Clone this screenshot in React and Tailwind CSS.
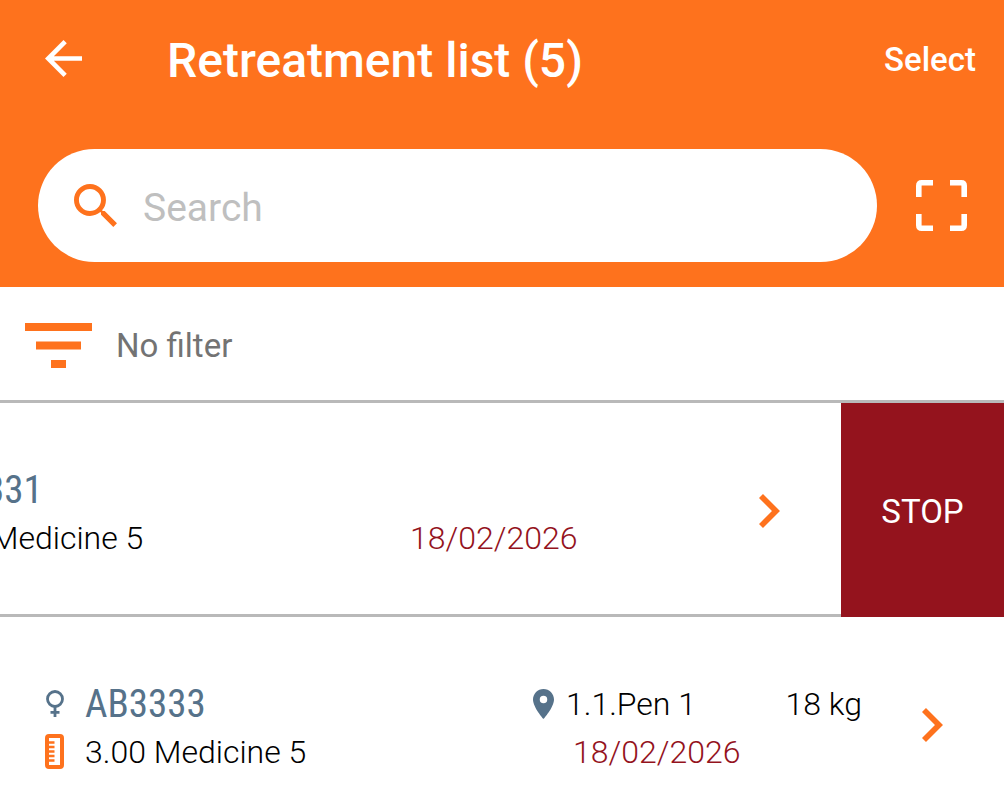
import React from "react";

function BackIcon() {
  return (
    <svg viewBox="4 4 16 16" className="size-[37px] fill-current" aria-hidden="true">
      <path d="M20 11H7.83l5.59-5.59L12 4l-8 8 8 8 1.41-1.41L7.83 13H20v-2z" />
    </svg>
  );
}

function SearchIcon() {
  return (
    <svg viewBox="3 3 17.5 17.5" className="size-[43px] shrink-0 fill-[#fe721d]" aria-hidden="true">
      <path d="M15.5 14h-.79l-.28-.27A6.471 6.471 0 0 0 16 9.5 6.5 6.5 0 1 0 9.5 16c1.61 0 3.09-.59 4.23-1.57l.27.28v.79l5 4.99L20.49 19l-4.99-5zm-6 0C7.01 14 5 11.99 5 9.5S7.01 5 9.5 5 14 7.01 14 9.5 11.99 14 9.5 14z" />
    </svg>
  );
}

function ScanIcon() {
  return (
    <svg viewBox="0 0 51 51" className="size-[51px] fill-none stroke-current stroke-[5.6]" aria-hidden="true">
      <path d="M2.8 17V5.8Q2.8 2.8 5.8 2.8H17M34 2.8H45.2Q48.2 2.8 48.2 5.8V17M48.2 34V45.2Q48.2 48.2 45.2 48.2H34M17 48.2H5.8Q2.8 48.2 2.8 45.2V34" />
    </svg>
  );
}

function FilterIcon() {
  return (
    <svg viewBox="0 0 67 45" className="h-[45px] w-[67px] fill-[#fe721d]" aria-hidden="true">
      <path d="M0 0H67V8H0zM11 18.5H56V26.5H11zM26 37H41V45H26z" />
    </svg>
  );
}

function ChevronIcon() {
  return (
    <svg viewBox="8.59 6 7.41 12" className="h-[34px] w-[21px] fill-[#fe721d]" aria-hidden="true">
      <path d="M10 6 8.59 7.41 13.17 12l-4.58 4.59L10 18l6-6z" />
    </svg>
  );
}

function FemaleIcon() {
  return (
    <svg viewBox="0 0 18 27" className="h-[27px] w-[18px] fill-none stroke-[#56728a] stroke-[2.8]" aria-hidden="true">
      <circle cx="9" cy="9" r="7.5" />
      <path d="M9 16.5V27M4.5 22.3H13.5" />
    </svg>
  );
}

function DoseIcon() {
  return (
    <svg viewBox="0 0 19 35" className="h-[35px] w-[19px] fill-none stroke-[#fe721d]" aria-hidden="true">
      <rect x="2" y="2" width="15" height="31" rx="2" strokeWidth="4" />
      <path d="M4 8.5H9.5M4 13H9.5M4 17.5H9.5M4 22H9.5M4 26.5H9.5" strokeWidth="2.4" />
    </svg>
  );
}

function PinIcon() {
  return (
    <svg viewBox="5 2 14 20" className="h-[30px] w-[21px] fill-[#56728a]" aria-hidden="true">
      <path d="M12 2C8.13 2 5 5.13 5 9c0 5.25 7 13 7 13s7-7.75 7-13c0-3.87-3.13-7-7-7zm0 9.5a2.5 2.5 0 1 1 0-5 2.5 2.5 0 0 1 0 5z" />
    </svg>
  );
}

const animals = [
  { id: "AB3331", dose: "3.00 Medicine 5", date: "18/02/2026", swiped: true },
  { id: "AB3333", dose: "3.00 Medicine 5", date: "18/02/2026", pen: "1.1.Pen 1", weight: "18 kg" },
];

function AnimalRow({ animal }) {
  return (
    <li className="flex h-[214px] shrink-0 justify-end overflow-hidden">
      <div className="flex w-full shrink-0 items-center border-b-3 border-[#b9b9b9] pt-1 pr-[61px] pl-[45px]">
        <div className="grid flex-1 auto-rows-[48px] grid-cols-[20px_1fr] items-center gap-x-5 pt-1.5">
          <span className="flex justify-center">
            <FemaleIcon />
          </span>
          <span className="font-['Roboto_Condensed',Roboto,sans-serif] text-[39px] leading-[48px] font-normal text-[#56728a]">
            {animal.id}
          </span>
          <DoseIcon />
          <span>{animal.dose}</span>
        </div>
        <div className="grid w-[329px] auto-rows-[48px] items-center pt-1.5">
          <div className="flex items-center gap-3">
            {animal.pen && <PinIcon />}
            <span className="flex-1">{animal.pen}</span>
            <span>{animal.weight}</span>
          </div>
          <time className="pl-10 text-[#94131d]">{animal.date}</time>
        </div>
        <button type="button" aria-label={`Open ${animal.id}`} className="ml-[60px]">
          <ChevronIcon />
        </button>
      </div>
      {animal.swiped && (
        <button type="button" className="w-[163px] shrink-0 bg-[#94131d] pt-1 text-[33px] font-normal text-white">
          STOP
        </button>
      )}
    </li>
  );
}

export default function App() {
  return (
    <div className="flex h-screen flex-col overflow-hidden bg-white font-[Roboto,sans-serif] text-[32px] leading-[48px] font-light text-black">
      <header className="shrink-0 bg-[#fe721d] pb-[25px] text-white">
        <div className="flex h-[149px] items-start pt-[30px] pr-7 pl-[45px]">
          <button type="button" aria-label="Back" className="flex h-14 items-center">
            <BackIcon />
          </button>
          <h1 className="ml-[85px] flex-1 text-[48px] leading-[62px] font-medium">Retreatment list (5)</h1>
          <button type="button" className="h-[60px] text-[33px] font-medium">Select</button>
        </div>
        <div className="flex items-center gap-[39px] pr-[37px] pl-[38px]">
          <label className="flex h-[113px] flex-1 items-center gap-[26px] rounded-full bg-white px-9">
            <SearchIcon />
            <input
              type="search"
              aria-label="Search"
              placeholder="Search"
              className="w-full min-w-0 bg-transparent pt-1 text-[39px] leading-[48px] font-normal text-black outline-none placeholder:text-[#bfbfbf]"
            />
          </label>
          <button type="button" aria-label="Scan">
            <ScanIcon />
          </button>
        </div>
      </header>
      <button
        type="button"
        className="flex h-[116px] shrink-0 items-center gap-6 border-b-3 border-[#b9b9b9] pt-1 pl-[25px] text-[33px] font-normal text-[#737373]"
      >
        <FilterIcon />
        <span>No filter</span>
      </button>
      <ul className="flex min-h-0 flex-1 flex-col overflow-hidden">
        {animals.map((animal) => (
          <AnimalRow key={animal.id} animal={animal} />
        ))}
      </ul>
    </div>
  );
}
